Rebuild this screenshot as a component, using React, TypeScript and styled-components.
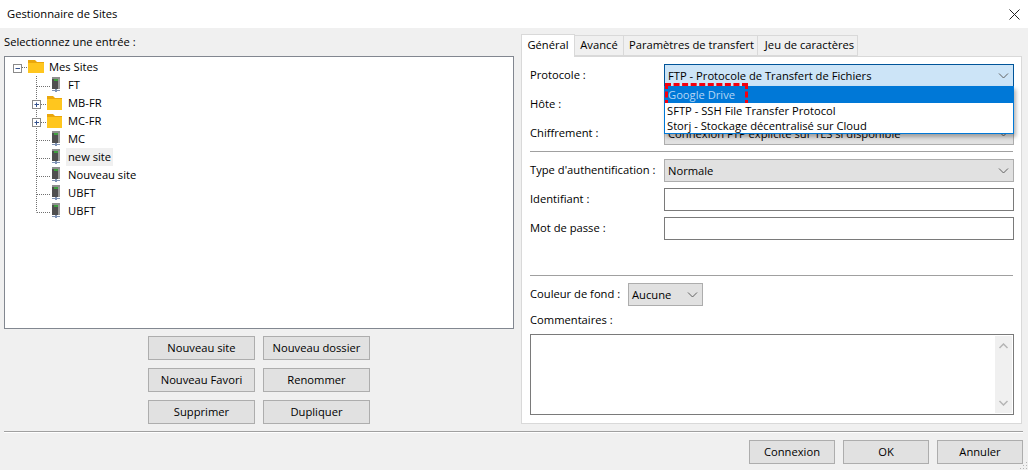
import React from "react";
import styled, { createGlobalStyle } from "styled-components";

const Global = createGlobalStyle`
  html, body { margin: 0; padding: 0; background: #f0f0f0; }
  body { font-family: "Open Sans", "Noto Sans", sans-serif; font-size: 11.2px; color: #000; }
  * { box-sizing: border-box; }
`;

const Window = styled.div`
  width: 1028px; height: 470px; display: flex; flex-direction: column;
  position: relative; overflow: hidden; background: #f0f0f0;
`;
const TitleBar = styled.div`
  height: 28px; background: #fff; display: flex; align-items: center;
  justify-content: space-between; padding: 0 8px 2px 7px; flex: none;
`;
const CloseIcon = styled.svg`width: 11px; height: 11px; display: block; margin-top: 2px;`;
const Main = styled.div`display: flex; gap: 7px; padding: 6px 6px 0 4px; height: 403px; flex: none;`;
const LeftColumn = styled.div`width: 510px; display: flex; flex-direction: column;`;
const SectionLabel = styled.div`height: 22px; line-height: 16px;`;
const TreeBox = styled.div`
  height: 273px; background: #fff; border: 1px solid #828790; padding-top: 1px; flex: none;
`;
const TreeRow = styled.div`display: flex; align-items: center; height: 18px; position: relative;`;
const Gutter = styled.svg<{ $w: number }>`width: ${p => p.$w}px; height: 18px; flex: none; display: block;`;
const TreeIconBox = styled.svg<{ $w: number }>`width: ${p => p.$w}px; height: 18px; flex: none; display: block;`;
const TreeLabel = styled.span<{ $sel?: boolean; $ml: number }>`
  margin-left: ${p => p.$ml}px; padding: 0 2px; height: 18px; line-height: 17px;
  background: ${p => (p.$sel ? "#f0f0f0" : "transparent")};
`;
const ButtonGrid = styled.div`
  display: grid; grid-template-columns: 107px 107px; gap: 8px; justify-content: center; margin-top: 7px;
`;
const Btn = styled.div<{ $w?: number }>`
  width: ${p => (p.$w ? `${p.$w}px` : "auto")}; height: 24px; background: #e1e1e1; border: 1px solid #adadad;
  display: flex; align-items: center; justify-content: center; padding-bottom: 2px;
`;
const RightColumn = styled.div`width: 501px; display: flex; flex-direction: column;`;
const TabRow = styled.div`display: flex; align-items: flex-end; height: 22px; flex: none; position: relative; z-index: 1;`;
const Tab = styled.div<{ $active?: boolean; $w: number; $shift?: number }>`
  width: ${p => p.$w}px; height: ${p => (p.$active ? 23 : 21)}px; margin-left: ${p => (p.$active ? 0 : -1)}px;
  margin-bottom: ${p => (p.$active ? -1 : 0)}px;
  background: ${p => (p.$active ? "#fff" : "#f0f0f0")};
  border: 1px solid #d9d9d9; border-bottom: ${p => (p.$active ? "none" : "1px solid #d9d9d9")};
  display: flex; align-items: center; justify-content: center;
  padding: 0 0 ${p => (p.$active ? 4 : 2)}px ${p => p.$shift ?? 0}px;
  white-space: nowrap;
  &:first-child { margin-left: 0; }
`;
const Panel = styled.div`
  height: 368px; background: #fff; border: 1px solid #d9d9d9; padding: 7px 7px 0 8px; flex: none;
`;
const FormGrid = styled.div`display: grid; grid-template-columns: 134px 350px; row-gap: 6px; align-items: center;`;
const FieldLabel = styled.div`line-height: 16px; padding-bottom: 2px;`;
const SelectBox = styled.div<{ $focus?: boolean; $w?: number }>`
  height: 23px; width: ${p => (p.$w ? `${p.$w}px` : "100%")}; flex: none;
  background: ${p => (p.$focus ? "#cce4f7" : "#e1e1e1")};
  border: 1px solid ${p => (p.$focus ? "#005499" : "#adadad")};
  display: flex; align-items: center; justify-content: space-between;
  padding: 0 4px 0 3px; position: relative; white-space: nowrap;
`;
const Chevron = styled.svg`width: 11px; height: 6px; flex: none; display: block; margin-right: 0;`;
const InputBox = styled.div`height: 23px; background: #fff; border: 1px solid #7a7a7a;`;
const Rule = styled.div<{ $top: number; $bottom: number }>`
  height: 1px; background: #a0a0a0; margin: ${p => p.$top}px 1px ${p => p.$bottom}px 0;
`;
const ColourRow = styled.div`display: flex; align-items: center; height: 23px;`;
const ColourLabel = styled.div`width: 98px; line-height: 16px; padding-bottom: 2px;`;
const CommentLabel = styled.div`height: 28px; line-height: 16px; padding-top: 6px;`;
const TextArea = styled.div`
  height: 81px; background: #fff; border: 1px solid #7a7a7a; display: flex; justify-content: flex-end; padding: 1px;
`;
const ScrollBar = styled.div`
  width: 17px; background: #f0f0f0; display: flex; flex-direction: column;
  justify-content: space-between; align-items: center; padding: 7px 0;
`;
const Dropdown = styled.div`
  position: absolute; left: -1px; right: -1px; top: 21px; height: 48px; background: #fff; z-index: 3;
  border: 1px solid #0078d7; box-shadow: 2px 3px 4px rgba(0,0,0,.3); display: flex; flex-direction: column;
`;
const DropItem = styled.div<{ $hl?: boolean }>`
  height: ${p => (p.$hl ? 16 : 15)}px; line-height: 14px; padding: 1px 0 0 ${p => (p.$hl ? 3 : 2)}px; position: relative;
  background: ${p => (p.$hl ? "#0078d7" : "#fff")};
  color: ${p => (p.$hl ? "#b5d6f5" : "#000")};
`;
const RedMark = styled.div`
  position: absolute; left: 0; top: -4px; width: 83px; height: 23px;
  border: 3px dashed #f5000f; pointer-events: none;
`;
const Footer = styled.div`flex: 1; display: flex; flex-direction: column; padding: 0 5px 0 4px;`;
const FooterRule = styled.div`height: 2px; border-top: 1px solid #a0a0a0; border-bottom: 1px solid #fff;`;
const FooterButtons = styled.div`display: flex; justify-content: flex-end; gap: 8px; margin-top: 7px;`;
const Grip = styled.svg`position: absolute; right: 0; bottom: 0; width: 9px; height: 9px;`;

const ChevronDown = ({ c = "#606060" }: { c?: string }) => (
  <Chevron viewBox="0 0 11 6"><path d="M1 .5 5.5 5 10 .5" fill="none" stroke={c} /></Chevron>
);

const Folder = ({ w, top, bottom }: { w: number; top: number; bottom: number }) => (
  <TreeIconBox $w={w} viewBox={`0 0 ${w} 18`}>
    <path d={`M0 ${top}h${Math.round(w * 0.42)}l2 2H${w}V${top + 4}H0z`} fill="#eaa70c" />
    <path d={`M0 ${top + 3}H${w}V${bottom}H0z`} fill="#ffc61e" />
  </TreeIconBox>
);
const Server = () => (
  <TreeIconBox $w={9} viewBox="0 0 9 18">
    <rect x="1" y="1" width="8" height="12" fill="#4f4f4f" />
    <rect x="1" y="1" width="8" height="2" fill="#8f8f8f" />
    <rect x="3" y="3" width="4" height="2" fill="#3f9e3f" />
    <rect x="7" y="3" width="2" height="10" fill="#9a9a9a" />
    <rect x="4" y="13" width="2" height="3" fill="#7f93b5" />
    <rect x="1" y="14" width="8" height="1" fill="#7f93b5" />
  </TreeIconBox>
);

const Expander = ({ kind }: { kind: "minus" | "plus" }) => {
  const x = kind === "minus" ? 8.5 : 27.5;
  return (
    <g>
      <rect x={x} y="6.5" width="8" height="8" fill="#fff" stroke="#8a8a8a" />
      <path d={`M${x + 2} 10.5h4.5`} stroke="#34518c" />
      {kind === "plus" && <path d={`M${x + 4} 8.5v4.5`} stroke="#34518c" />}
    </g>
  );
};

type Node = { label: string; kind: "server" | "folder"; last?: boolean; sel?: boolean };
const nodes: Node[] = [
  { label: "FT", kind: "server" },
  { label: "MB-FR", kind: "folder" },
  { label: "MC-FR", kind: "folder" },
  { label: "MC", kind: "server" },
  { label: "new site", kind: "server", sel: true },
  { label: "Nouveau site", kind: "server" },
  { label: "UBFT", kind: "server" },
  { label: "UBFT", kind: "server", last: true },
];

const dots = { stroke: "#707070", strokeDasharray: "1 1", fill: "none" };

export default function App() {
  return (
    <Window>
      <Global />
      <TitleBar>
        <span>Gestionnaire de Sites</span>
        <CloseIcon viewBox="0 0 11 11"><path d="M.5.5l10 10M10.5.5l-10 10" stroke="#222" fill="none" /></CloseIcon>
      </TitleBar>
      <Main>
        <LeftColumn>
          <SectionLabel>Selectionnez une entrée :</SectionLabel>
          <TreeBox>
            <TreeRow>
              <Gutter $w={23} viewBox="0 0 23 18">
                <path d="M17 9.5H23" {...dots} />
                <Expander kind="minus" />
              </Gutter>
              <Folder w={16} top={2} bottom={15} />
              <TreeLabel $ml={3}>Mes Sites</TreeLabel>
            </TreeRow>
            {nodes.map((n, i) => (
              <TreeRow key={i}>
                <Gutter $w={n.kind === "folder" ? 42 : 46} viewBox={`0 0 ${n.kind === "folder" ? 42 : 46} 18`}>
                  <path d={n.last ? "M31.5 0v10.5" : "M31.5 0v18"} {...dots} />
                  <path d={n.kind === "folder" ? "M36 10.5h6" : "M32 10.5h13"} {...dots} />
                  {n.kind === "folder" && <Expander kind="plus" />}
                </Gutter>
                {n.kind === "server" ? <Server /> : <Folder w={15} top={2} bottom={16} />}
                <TreeLabel $ml={n.kind === "server" ? 6 : 4} $sel={n.sel}>{n.label}</TreeLabel>
              </TreeRow>
            ))}
          </TreeBox>
          <ButtonGrid>
            <Btn>Nouveau site</Btn>
            <Btn>Nouveau dossier</Btn>
            <Btn>Nouveau Favori</Btn>
            <Btn>Renommer</Btn>
            <Btn>Supprimer</Btn>
            <Btn>Dupliquer</Btn>
          </ButtonGrid>
        </LeftColumn>
        <RightColumn>
          <TabRow>
            <Tab $active $w={54}>Général</Tab>
            <Tab $w={50}>Avancé</Tab>
            <Tab $w={135} $shift={2}>Paramètres de transfert</Tab>
            <Tab $w={101} $shift={4}>Jeu de caractères</Tab>
          </TabRow>
          <Panel>
            <FormGrid>
              <FieldLabel>Protocole :</FieldLabel>
              <SelectBox $focus>
                <span>FTP - Protocole de Transfert de Fichiers</span>
                <ChevronDown />
                <Dropdown>
                  <DropItem $hl>
                    Google Drive
                    <RedMark />
                  </DropItem>
                  <DropItem>SFTP - SSH File Transfer Protocol</DropItem>
                  <DropItem>Storj - Stockage décentralisé sur Cloud</DropItem>
                </Dropdown>
              </SelectBox>
              <FieldLabel>Hôte :</FieldLabel>
              <InputBox />
              <FieldLabel>Chiffrement :</FieldLabel>
              <SelectBox>
                <span>Connexion FTP explicite sur TLS si disponible</span>
                <ChevronDown />
              </SelectBox>
            </FormGrid>
            <Rule $top={6} $bottom={7} />
            <FormGrid>
              <FieldLabel>Type d'authentification :</FieldLabel>
              <SelectBox>
                <span>Normale</span>
                <ChevronDown />
              </SelectBox>
              <FieldLabel>Identifiant :</FieldLabel>
              <InputBox />
              <FieldLabel>Mot de passe :</FieldLabel>
              <InputBox />
            </FormGrid>
            <Rule $top={35} $bottom={7} />
            <ColourRow>
              <ColourLabel>Couleur de fond :</ColourLabel>
              <SelectBox $w={75}>
                <span>Aucune</span>
                <ChevronDown />
              </SelectBox>
            </ColourRow>
            <CommentLabel>Commentaires :</CommentLabel>
            <TextArea>
              <ScrollBar>
                <Chevron viewBox="0 0 11 6"><path d="M1.5 5 5.5 1l4 4" fill="none" stroke="#b5b5b5" strokeWidth="1.5" /></Chevron>
                <Chevron viewBox="0 0 11 6"><path d="M1.5 1l4 4 4-4" fill="none" stroke="#b5b5b5" strokeWidth="1.5" /></Chevron>
              </ScrollBar>
            </TextArea>
          </Panel>
        </RightColumn>
      </Main>
      <Footer>
        <FooterRule />
        <FooterButtons>
          <Btn $w={86}>Connexion</Btn>
          <Btn $w={86}>OK</Btn>
          <Btn $w={86}>Annuler</Btn>
        </FooterButtons>
      </Footer>
      <Grip viewBox="0 0 9 9">
        <path d="M7 1h1v1H7zM4 4h1v1H4zM7 4h1v1H7zM1 7h1v1H1zM4 7h1v1H4zM7 7h1v1H7z" fill="#b5b5b5" />
      </Grip>
    </Window>
  );
}
